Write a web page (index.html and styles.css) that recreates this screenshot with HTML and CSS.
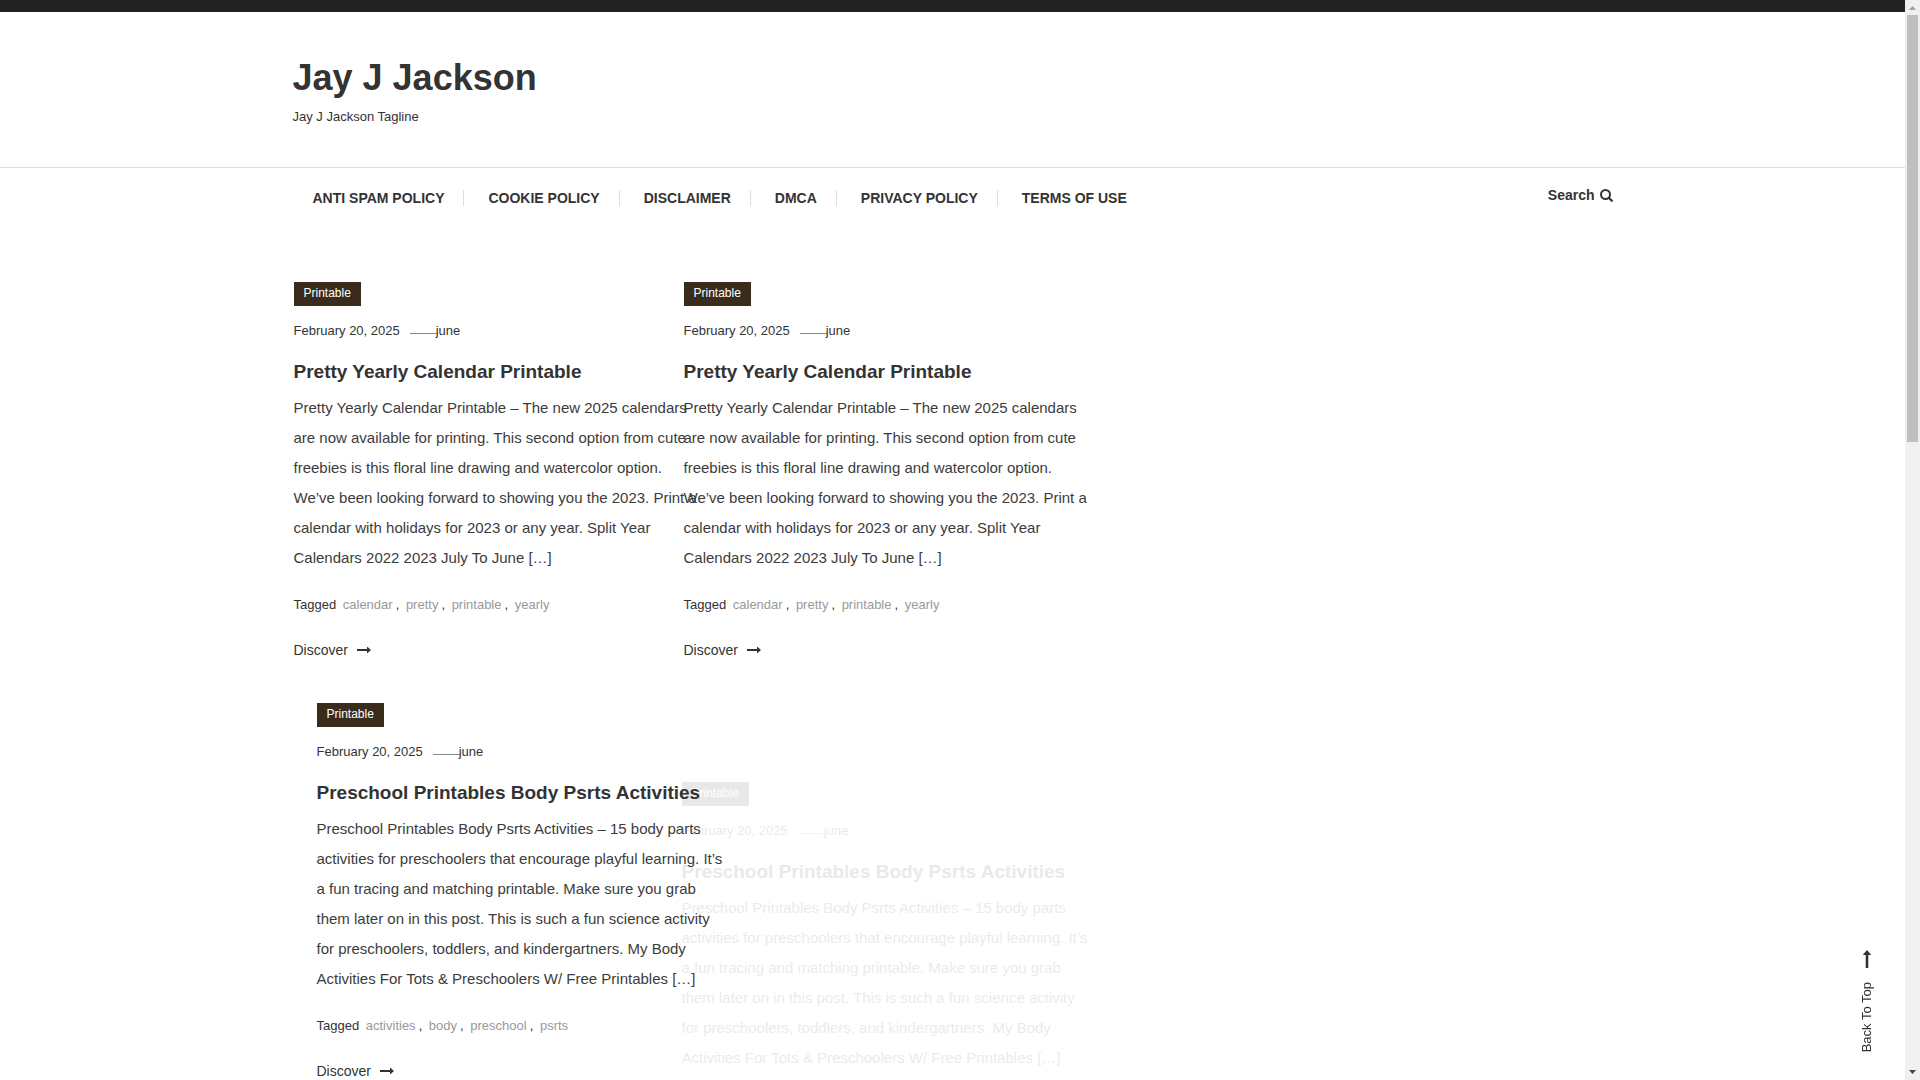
FILE: index.html
```html
<!DOCTYPE html>
<html lang="en">
<head>
  <meta charset="UTF-8" />
  <meta name="viewport" content="width=device-width, initial-scale=1" />
  <title>Jay J Jackson</title>
  <link rel="stylesheet" href="styles.css">
</head>
<body>
  <svg class="sprite" aria-hidden="true">
    <symbol id="arrow" viewBox="0 0 14 8">
      <path d="M0 3h10V1.2q0-.7.6-.2L14 4l-3.400 3q-.6.5-.6-.2V5H0z" />
    </symbol>
  </svg>

  <div class="topbar"></div>

  <header class="site-header">
    <div class="branding container">
      <h1 class="site-title"><a href="#">Jay J Jackson</a></h1>
      <p class="tagline">Jay J Jackson Tagline</p>
    </div>
    <div class="nav-row">
      <div class="nav-inner container">
        <nav>
          <ul class="menu">
            <li><a href="#">Anti Spam Policy</a></li>
            <li><a href="#">Cookie Policy</a></li>
            <li><a href="#">Disclaimer</a></li>
            <li><a href="#">DMCA</a></li>
            <li><a href="#">Privacy Policy</a></li>
            <li><a href="#">Terms of Use</a></li>
          </ul>
        </nav>
        <button class="search-btn" type="button">
          Search
          <svg width="13" height="13" viewBox="0 0 13 13" aria-hidden="true">
            <circle cx="5.500" cy="5.500" r="4.500" fill="none" stroke="currentColor" stroke-width="2" />
            <path d="M8.800 8.800l3 3" stroke="currentColor" stroke-width="2.200" stroke-linecap="round" />
          </svg>
        </button>
      </div>
    </div>
  </header>

  <main class="container">
    <div class="posts">
      <article class="post">
        <a class="category" href="#">Printable</a>
        <div class="meta"><a href="#">February 20, 2025</a><a class="author" href="#">june</a></div>
        <h2><a href="#">Pretty Yearly Calendar Printable</a></h2>
        <p class="excerpt">Pretty Yearly Calendar Printable – The new 2025 calendars are now available for printing. This second option from cute freebies is this floral line drawing and watercolor option. We’ve been looking forward to showing you the 2023. Print a calendar with holidays for 2023 or any year. Split Year Calendars 2022 2023 July To June […]</p>
        <div class="tags">Tagged <a href="#">calendar</a>, <a href="#">pretty</a>, <a href="#">printable</a>, <a href="#">yearly</a></div>
        <a class="discover" href="#">Discover <svg width="14" height="8"><use href="#arrow" /></svg></a>
      </article>

      <article class="post">
        <a class="category" href="#">Printable</a>
        <div class="meta"><a href="#">February 20, 2025</a><a class="author" href="#">june</a></div>
        <h2><a href="#">Pretty Yearly Calendar Printable</a></h2>
        <p class="excerpt">Pretty Yearly Calendar Printable – The new 2025 calendars are now available for printing. This second option from cute freebies is this floral line drawing and watercolor option. We’ve been looking forward to showing you the 2023. Print a calendar with holidays for 2023 or any year. Split Year Calendars 2022 2023 July To June […]</p>
        <div class="tags">Tagged <a href="#">calendar</a>, <a href="#">pretty</a>, <a href="#">printable</a>, <a href="#">yearly</a></div>
        <a class="discover" href="#">Discover <svg width="14" height="8"><use href="#arrow" /></svg></a>
      </article>

      <article class="post post-shifted">
        <a class="category" href="#">Printable</a>
        <div class="meta"><a href="#">February 20, 2025</a><a class="author" href="#">june</a></div>
        <h2><a href="#">Preschool Printables Body Psrts Activities</a></h2>
        <p class="excerpt">Preschool Printables Body Psrts Activities – 15 body parts activities for preschoolers that encourage playful learning. It’s a fun tracing and matching printable. Make sure you grab them later on in this post. This is such a fun science activity for preschoolers, toddlers, and kindergartners. My Body Activities For Tots &amp; Preschoolers W/ Free Printables […]</p>
        <div class="tags">Tagged <a href="#">activities</a>, <a href="#">body</a>, <a href="#">preschool</a>, <a href="#">psrts</a></div>
        <a class="discover" href="#">Discover <svg width="14" height="8"><use href="#arrow" /></svg></a>
      </article>

      <article class="post post-entering">
        <a class="category" href="#">Printable</a>
        <div class="meta"><a href="#">February 20, 2025</a><a class="author" href="#">june</a></div>
        <h2><a href="#">Preschool Printables Body Psrts Activities</a></h2>
        <p class="excerpt">Preschool Printables Body Psrts Activities – 15 body parts activities for preschoolers that encourage playful learning. It’s a fun tracing and matching printable. Make sure you grab them later on in this post. This is such a fun science activity for preschoolers, toddlers, and kindergartners. My Body Activities For Tots &amp; Preschoolers W/ Free Printables […]</p>
        <div class="tags">Tagged <a href="#">activities</a>, <a href="#">body</a>, <a href="#">preschool</a>, <a href="#">psrts</a></div>
        <a class="discover" href="#">Discover <svg width="14" height="8"><use href="#arrow" /></svg></a>
      </article>
    </div>
  </main>

  <a class="back-to-top" href="#">
    <svg width="8" height="18" viewBox="0 0 8 18" aria-hidden="true">
      <path d="M2.700 18V5H.6q-.8 0-.3-.7L4 0l3.700 4.300q.5.7-.3.7H5.300v13z" />
    </svg>
    <span>Back To Top</span>
  </a>

  <div class="scrollbar" aria-hidden="true">
    <svg width="7" height="4" viewBox="0 0 7 4"><path class="arrow-off" d="M0 4l3.500-4L7 4z" /></svg>
    <div class="thumb"></div>
    <svg width="7" height="4" viewBox="0 0 7 4"><path d="M0 0h7L3.500 4z" /></svg>
  </div>
</body>
</html>
```
FILE: styles.css
```css
* { box-sizing: border-box; }

body {
  margin: 0;
  padding-right: 15px;
  height: 100vh;
  overflow: hidden;
  background: #fff;
  color: #333;
  font-family: "Liberation Sans", Arial, sans-serif;
  font-size: 15px;
}

a { color: inherit; text-decoration: none; }
svg { fill: currentColor; }
.sprite { display: none; }

.container { max-width: 1320px; margin: 0 auto; }

/* header */
.topbar { height: 12px; background: #222; }
.branding { padding: 44px 0 40px; }
.site-title { margin: 0; font-size: 36px; line-height: 44px; }
.tagline { margin: 7px 0 0; font-size: 13px; line-height: 20px; }

.nav-row { border-top: 1px solid #ddd; }
.nav-inner { display: flex; justify-content: space-between; align-items: flex-start; padding-top: 19px; }
.menu { display: flex; gap: 4px; margin: 3px 0 0; padding: 0; list-style: none; }
.menu a {
  display: block;
  padding: 0 19px 0 20px;
  border-right: 1px solid #ddd;
  font-size: 14px;
  font-weight: bold;
  line-height: 16px;
  text-transform: uppercase;
}
.menu li:last-child a { border-right: 0; }

.search-btn {
  display: flex;
  align-items: center;
  gap: 5px;
  padding: 0;
  border: 0;
  background: none;
  color: inherit;
  font: bold 14px/16px "Liberation Sans", Arial, sans-serif;
  cursor: pointer;
}

/* posts */
.posts {
  display: grid;
  grid-template-columns: 390px 390px;
  grid-template-rows: 421px auto;
  align-items: start;
  padding: 76px 0 0 1px;
}
.post { width: 410px; }
.post-shifted { position: relative; z-index: 1; margin-left: 23px; }
.post-entering { margin-top: 79px; margin-left: -2px; opacity: 0.1; }

.category {
  display: block;
  width: max-content;
  padding: 0 10px 2px;
  background: #3a2c1c;
  color: #fff;
  font-size: 12px;
  line-height: 22px;
}
.meta { display: flex; margin-top: 15px; font-size: 13px; line-height: 20px; }
.author { display: flex; margin-left: 10px; }
.author::before {
  content: "";
  width: 28px;
  height: 1px;
  margin: 12px -2px 0 0;
  background: #888;
}
.post h2 { margin: 19px 0 9px; font-size: 19px; line-height: 24px; }
.excerpt { margin: 0; color: #3c3c3c; line-height: 30px; }
.tags { margin-top: 22px; font-size: 13px; line-height: 20px; }
.tags a { margin: 0 3px; color: #999; }
.discover { display: flex; align-items: center; gap: 9px; margin-top: 25px; font-size: 14px; line-height: 20px; }

/* fixed items */
.back-to-top {
  position: fixed;
  right: 45px;
  bottom: 28px;
  display: flex;
  flex-direction: column;
  align-items: center;
  gap: 14px;
  font-size: 13px;
  line-height: 16px;
}
.back-to-top span { writing-mode: vertical-rl; transform: rotate(180deg); }

.scrollbar {
  position: fixed;
  top: 0;
  right: 0;
  bottom: 0;
  display: flex;
  flex-direction: column;
  align-items: center;
  width: 15px;
  padding: 6px 0;
  background: #f0f0f0;
  color: #444;
}
.scrollbar .arrow-off { fill: #a0a0a0; }
.thumb { width: 11px; height: 40%; margin: 5px 0 auto; background: #bfbfbf; }
```
